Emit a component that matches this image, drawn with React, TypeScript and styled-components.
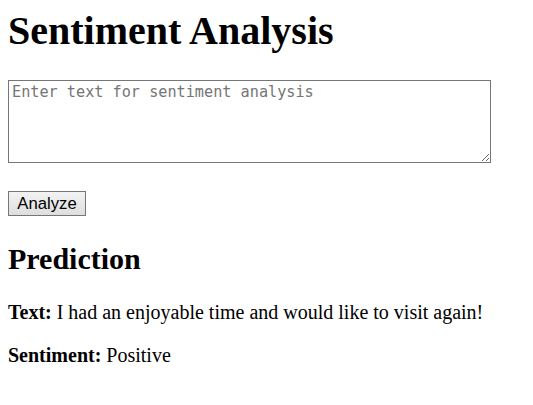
import React from "react";
import styled, { createGlobalStyle } from "styled-components";

const Global = createGlobalStyle`
  html, body { background: #ffffff; }
  body {
    margin: 8px;
    font-family: "Liberation Serif", "Times New Roman", serif;
    font-size: 20px;
    color: #000000;
  }
`;

const Page = styled.main`
  display: flex;
  flex-direction: column;
  align-items: flex-start;
`;

const Title = styled.h1`
  margin: 0 0 27px;
  font-size: 40px;
  font-weight: bold;
  line-height: 45px;
`;

const Form = styled.form`
  display: flex;
  flex-direction: column;
  align-items: flex-start;
  margin: 0;
`;

const TextArea = styled.textarea`
  box-sizing: border-box;
  width: 483px;
  height: 83px;
  margin: 0 0 28px;
  padding: 2px 3px;
  border: 1px solid #767676;
  font-family: Consolas, "DejaVu Sans Mono", "Liberation Mono", monospace;
  font-size: 15.2px;
  line-height: 19px;
  resize: both;
  &::placeholder {
    color: #757575;
  }
`;

const Button = styled.button`
  box-sizing: border-box;
  width: 78px;
  height: 25px;
  padding: 0;
  border: 1px solid #767676;
  border-radius: 0;
  background: linear-gradient(#f3f3f3, #dedede);
  font-family: "Liberation Sans", Arial, sans-serif;
  font-size: 16.7px;
  color: #000000;
  line-height: 23px;
`;

const Subtitle = styled.h2`
  margin: 26px 0 25px;
  font-size: 30px;
  font-weight: bold;
  line-height: 34px;
`;

const Line = styled.p`
  margin: 0 0 20px;
  line-height: 23px;
`;

const Label = styled.strong`
  font-weight: bold;
`;

export default function App() {
  return (
    <>
      <Global />
      <Page>
        <Title>Sentiment Analysis</Title>
        <Form onSubmit={(e) => e.preventDefault()}>
          <TextArea placeholder="Enter text for sentiment analysis" />
          <Button type="submit">Analyze</Button>
        </Form>
        <Subtitle>Prediction</Subtitle>
        <Line>
          <Label>Text:</Label> I had an enjoyable time and would like to visit again!
        </Line>
        <Line>
          <Label>Sentiment:</Label> Positive
        </Line>
      </Page>
    </>
  );
}
